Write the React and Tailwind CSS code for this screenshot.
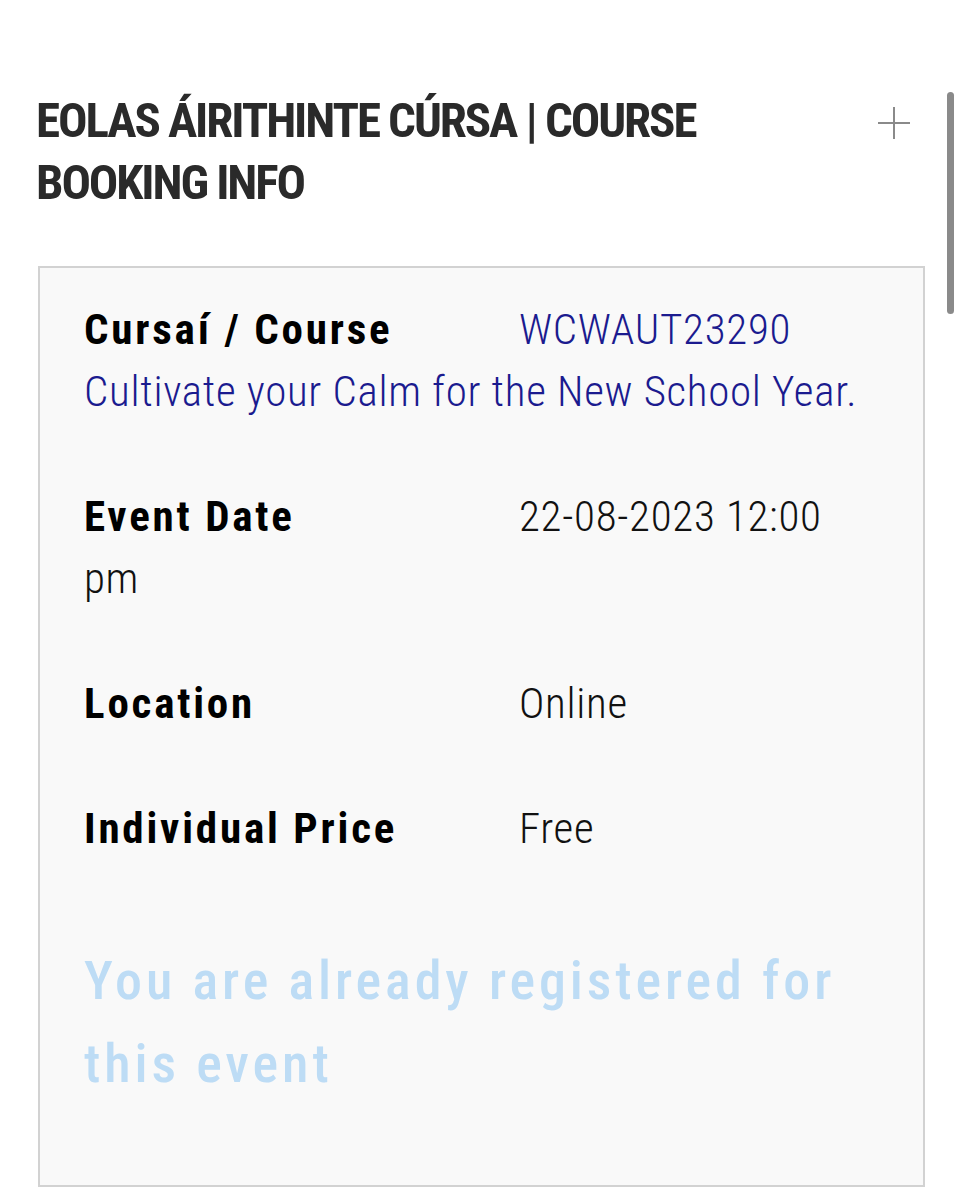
const rows = [
  { label: 'Cursaí / Course', value: 'WCWAUT23290 Cultivate your Calm for the New School Year.', link: true },
  { label: 'Event Date', value: '22-08-2023 12:00 pm' },
  { label: 'Location', value: 'Online' },
  { label: 'Individual Price', value: 'Free' },
];

function PlusIcon() {
  return (
    <svg width="34" height="34" viewBox="0 0 34 34" fill="none" stroke="#8a8a8a" strokeWidth="2">
      <path d="M17 1v32M1 17h32" />
    </svg>
  );
}

export default function App() {
  return (
    <main className="relative min-h-[1200px] bg-white font-['Roboto_Condensed','Roboto',sans-serif] font-stretch-condensed text-[#222]">
      <section className="pt-[90px] pl-[36px] pr-[38px]">
        <div className="flex items-start justify-between">
          <h2 className="max-w-[720px] text-[49px] leading-[62px] font-bold uppercase tracking-[-2.1px] text-[#2a2a2a]">
            Eolas Áirithinte Cúrsa | Course Booking Info
          </h2>
          <button className="mt-[16px] mr-[14px]" aria-label="Expand">
            <PlusIcon />
          </button>
        </div>

        <div className="mt-[52px] ml-[2px] w-[887px] border-2 border-[#d2d2d2] bg-[#f9f9f9] pt-[30px] pb-[80px] pl-[44px] pr-[56px]">
          {rows.map((r) => (
            <p key={r.label} className="mb-[63px] text-[43px] leading-[62px] font-light tracking-[0.7px] text-[#111]">
              <span className="inline-block w-[435px] font-bold tracking-[2.8px] text-black">{r.label}</span>
              {r.link ? (
                <a href="#" className="text-[#1b1b8f]">{r.value}</a>
              ) : (
                r.value
              )}
            </p>
          ))}
          <p className="mt-[80px] text-[54px] leading-[83px] font-medium tracking-[3.9px] text-[#bddcf5]">
            You are already registered for this event
          </p>
        </div>
      </section>

      <div className="absolute left-[947px] top-[92px] h-[222px] w-[7px] rounded-full bg-[#8a8a8a]" />
    </main>
  );
}
